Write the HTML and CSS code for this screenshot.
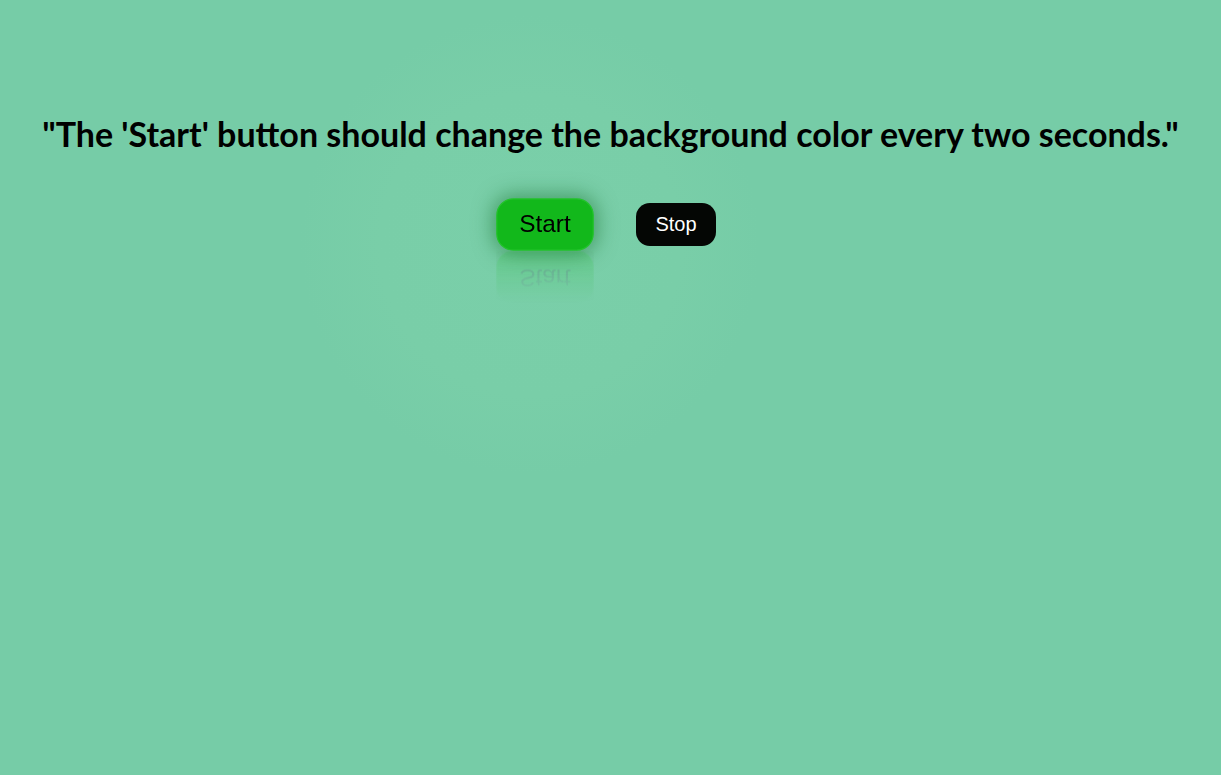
FILE: index.html
```html
<!DOCTYPE html>
<html>
<head>
<meta charset="utf-8">
<link rel="stylesheet" href="styles.css">
</head>
<body>
<div class="page">
  <h1 class="title">"The 'Start' button should change the background color every two seconds."</h1>
  <div class="controls">
    <button class="btn btn-start">Start</button>
    <button class="btn btn-stop">Stop</button>
  </div>
</div>
</body>
</html>
```
FILE: styles.css
```css
html, body {
  margin: 0;
  height: 100%;
}
body {
  background: #76cca7 radial-gradient(circle at 530px 245px, #7acfa9 0px, #79cea8 150px, #76cca7 230px);
}
.page {
  display: flex;
  flex-direction: column;
  align-items: center;
  padding-top: 112px;
}
.title {
  margin: 0;
  font-family: "Lato", "Liberation Sans", sans-serif;
  font-weight: 700;
  font-size: 34px;
  line-height: 44px;
  color: #000;
  text-align: center;
  white-space: nowrap;
}
.controls {
  display: flex;
  gap: 51px;
  align-items: center;
  margin-top: 47px;
}
.btn {
  width: 80px;
  height: 43px;
  border-radius: 14px;
  font-family: "Liberation Sans", Arial, sans-serif;
  font-size: 20px;
  padding: 0;
  cursor: pointer;
}
.btn-stop {
  background: #040604;
  color: #fff;
  border: none;
}
.btn-start {
  background: #12b81b;
  color: #000;
  border: 1px solid #22c42a;
  transform: scale(1.22);
  box-shadow: 0 0 16px 3px rgba(20, 110, 40, 0.5);
  -webkit-box-reflect: below 0px linear-gradient(transparent 0%, rgba(255, 255, 255, 0.2));
}
```
